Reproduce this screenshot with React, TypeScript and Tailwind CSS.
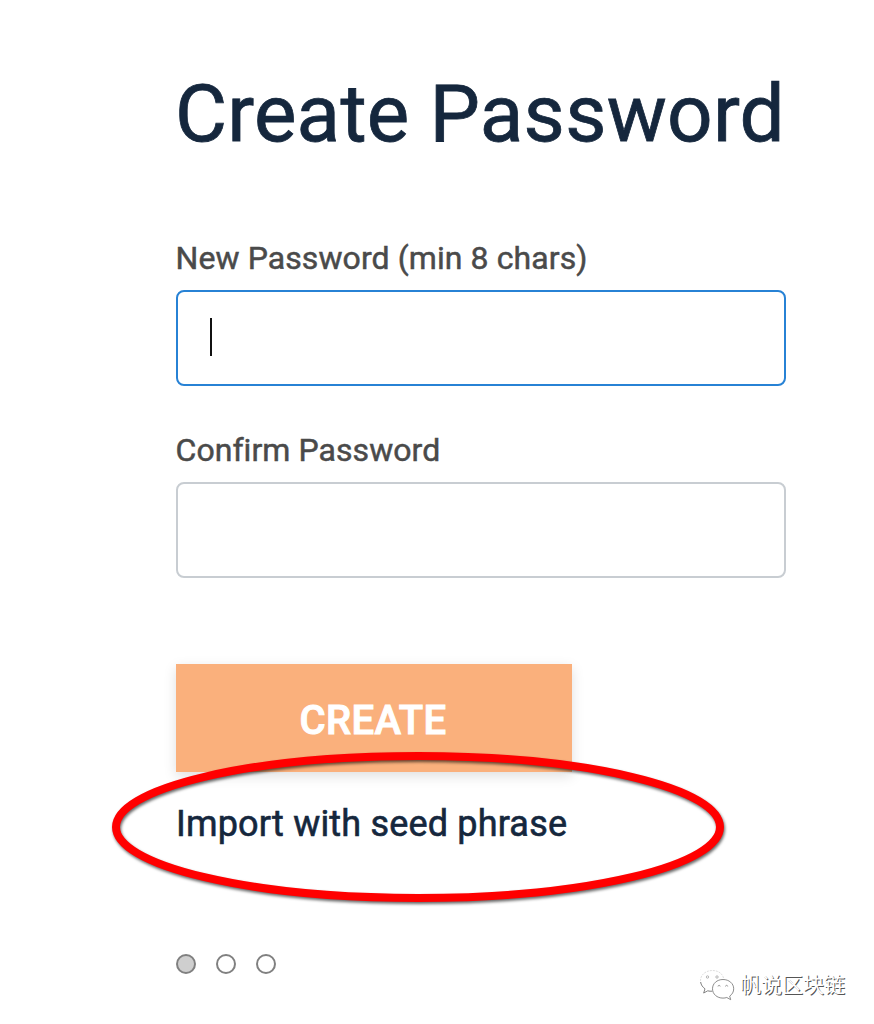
import { useState } from "react";

const steps = [0, 1, 2];

// WeChat style double bubble, white with a thin grey edge
function WechatMark() {
  return (
    <svg width="36" height="32" viewBox="0 0 36 32" fill="#fff" className="shrink-0">
      <path d="M24.500 9C23.500 4.500 19 1.500 13.500 1.500 6.500 1.500 1.500 6 1.500 11.500c0 3.400 1.700 6.300 4.500 8.300L4.700 24l4-2.200c1.500.4 3 .5 4.600.4" stroke="#d0d0d0" strokeWidth="0.7" strokeDasharray="2 1" />
      <path d="M1.600 13c.5 2.800 2 5.200 4.400 6.800L4.700 24l4-2.200c1.500.4 3 .5 4.600.4" stroke="#777" strokeWidth="0.9" />
      <path d="M24 10.500c-6 0-10.500 4-10.500 9.300s4.500 9.300 10.500 9.300c1.300 0 2.600-.2 3.800-.6l3.900 2.200-1-3.600c2.500-1.700 4-4.300 4-7.300 0-5.300-4.700-9.300-10.700-9.300z" stroke="#808080" strokeWidth="0.9" />
      <g stroke="#999" strokeWidth="0.7">
        <circle cx="8.500" cy="8" r="1.200" />
        <circle cx="18" cy="8" r="1.200" />
        <path d="M19 17.500c0-1.600 2.200-1.600 2.200 0M26.500 17.500c0-1.600 2.200-1.600 2.200 0" stroke="#777" />
      </g>
    </svg>
  );
}

export default function CreatePasswordPage() {
  const [password, setPassword] = useState("");
  const [confirm, setConfirm] = useState("");

  return (
    <div className="relative h-[1024px] w-[874px] overflow-hidden bg-white font-[Roboto,'Noto_Sans_CJK_SC',sans-serif]">
      <div className="flex w-[786px] flex-col items-start pl-[176px] pt-[66px]">
        <h1 className="-ml-px whitespace-nowrap text-[80px] leading-[96px] tracking-[0.25px] text-[#15273d] [-webkit-text-stroke:0.8px_#15273d]">
          Create Password
        </h1>

        {/* New password */}
        <label
          htmlFor="new-password"
          className="-ml-[0.5px] mt-[76px] text-[32px] leading-[40px] tracking-[0.09px] text-[#4a4a4a] [-webkit-text-stroke:0.5px_#4a4a4a]"
        >
          New Password (min 8 chars)
        </label>
        <div className="mt-3 flex h-24 w-full items-center rounded-lg border-2 border-[#2782d5] px-8">
          {!password && <span className="mb-[2px] h-[38px] w-[2px] bg-[#111]" />}
          <input
            id="new-password"
            type="password"
            value={password}
            onChange={(e) => setPassword(e.target.value)}
            className="h-full min-w-0 flex-1 text-[32px] caret-transparent outline-none"
          />
        </div>

        {/* Confirm password */}
        <label
          htmlFor="confirm-password"
          className="-ml-[0.5px] mt-11 text-[32px] leading-[40px] tracking-[0.06px] text-[#4a4a4a] [-webkit-text-stroke:0.5px_#4a4a4a]"
        >
          Confirm Password
        </label>
        <input
          id="confirm-password"
          type="password"
          value={confirm}
          onChange={(e) => setConfirm(e.target.value)}
          className="mt-3 h-24 w-full rounded-lg border-2 border-[#c8cdd2] px-8 text-[32px] outline-none"
        />

        <button className="mt-[86px] h-[108px] w-[396px] bg-[#fab07c] pr-[2px] pt-[6px] text-[40px] font-medium tracking-[0.35px] text-white shadow-[0_4px_12px_rgba(0,0,0,0.13)] [-webkit-text-stroke:1px_#fff]">
          CREATE
        </button>
        <a
          href="#"
          className="mt-[30px] text-[36px] leading-[44px] tracking-[0.18px] text-[#15273d] [-webkit-text-stroke:0.6px_#15273d]"
        >
          Import with seed phrase
        </a>

        {/* Step dots */}
        <div className="mt-[108px] flex gap-5">
          {steps.map((s) => (
            <span
              key={s}
              className={`size-5 rounded-full border-2 border-[#808080] ${s === 0 ? "bg-[#cfcfcf]" : "bg-white"}`}
            />
          ))}
        </div>
      </div>

      {/* Hand-drawn highlight */}
      <svg className="pointer-events-none absolute left-[100px] top-[740px] drop-shadow-[1px_2px_1.5px_rgba(0,0,0,0.6)]" width="640" height="180">
        <ellipse cx="318" cy="87" rx="302" ry="71" fill="none" stroke="#ff0000" strokeWidth="8" />
      </svg>

      {/* Watermark */}
      <div className="absolute left-[699px] top-[968px] flex items-center gap-[5px]">
        <WechatMark />
        <span className="whitespace-nowrap text-[21px] leading-[34px] text-white [text-shadow:1px_1px_0_#555]">
          帆说区块链
        </span>
      </div>
    </div>
  );
}
